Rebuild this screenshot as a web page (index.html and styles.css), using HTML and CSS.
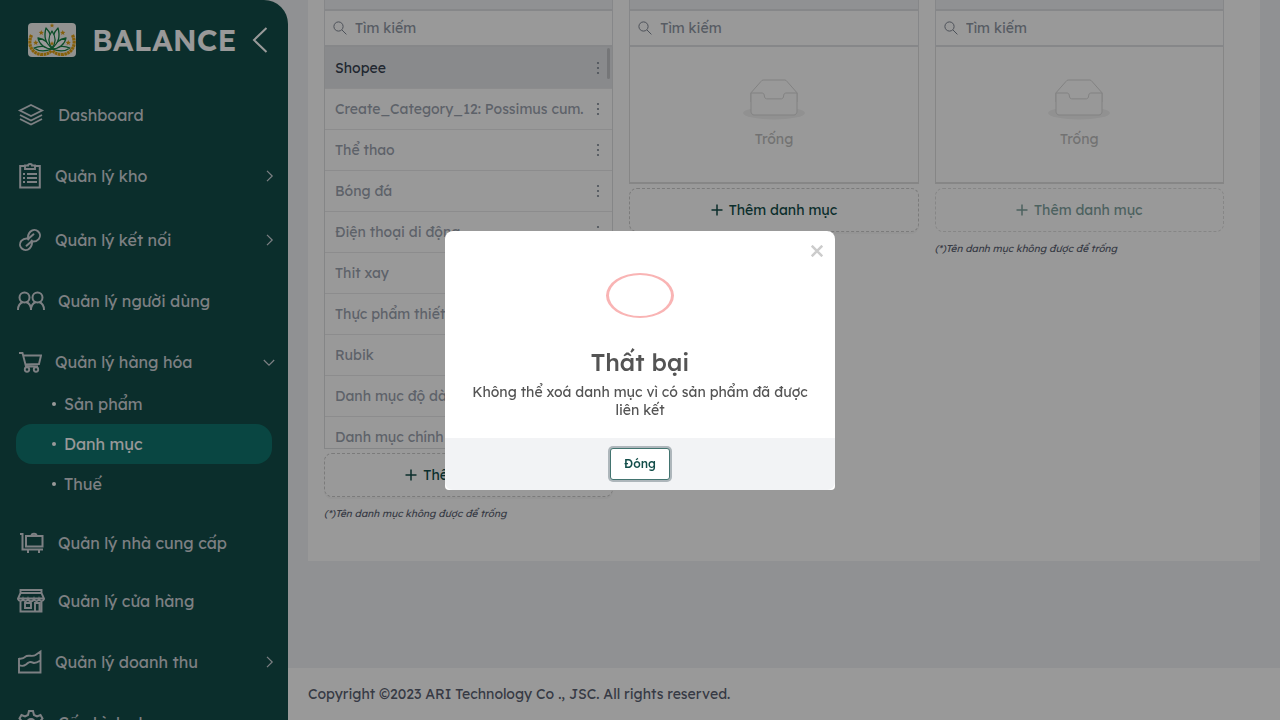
FILE: index.html
```html
<!DOCTYPE html>
<html lang="vi">
<head>
<meta charset="utf-8">
<meta name="viewport" content="width=device-width, initial-scale=1">
<title>Balance - Danh mục</title>
<link rel="stylesheet" href="styles.css">
</head>
<body>
<svg class="defs" aria-hidden="true">
  <symbol id="search" viewBox="0 0 14 14"><circle cx="5.500" cy="5.500" r="4.600"/><path d="M9 9l4.400 4.400"/></symbol>
  <symbol id="dots" viewBox="0 0 4 14"><circle cx="2" cy="2" r="1.100"/><circle cx="2" cy="7" r="1.100"/><circle cx="2" cy="12" r="1.100"/></symbol>
  <symbol id="plus" viewBox="0 0 12 12"><path d="M6 .5v11M.5 6h11"/></symbol>
  <symbol id="right" viewBox="0 0 14 14"><path d="M5 1.800l5.200 5.200L5 12.200"/></symbol>
  <symbol id="star" viewBox="-5 -5 10 10"><path d="M0-5L1.300-1.700 4.800-1.500 2.100.700 3 4.100 0 2.200-3 4.100-2.100.700-4.800-1.500-1.300-1.700z"/></symbol>
  <symbol id="empty" viewBox="0 0 64 41">
    <g transform="translate(0 1)" fill="none"><ellipse fill="#f2f2f2" stroke="none" cx="32" cy="33" rx="31" ry="6.500"/>
    <g stroke="#d9d9d9"><path d="M55 12.760L44.854 1.258C44.367.474 43.656 0 42.907 0H21.093c-.749 0-1.460.474-1.947 1.257L9 12.761V22h46v-9.240z"/>
    <path d="M41.613 15.931c0-1.605.994-2.930 2.227-2.931H55v18.137C55 33.260 53.680 35 52.050 35h-40.100C10.320 35 9 33.259 9 31.137V13h11.160c1.233 0 2.227 1.323 2.227 2.928v.022c0 1.605 1.005 2.901 2.237 2.901h14.752c1.232 0 2.237-1.308 2.237-2.913v-.007z" fill="#fefefe"/></g></g>
  </symbol>
</svg>

<aside class="sidebar">
  <div class="brand">
    <svg class="logo" viewBox="0 0 48 34" role="img" aria-label="Logo">
      <rect width="48" height="34" rx="4" fill="#f3f3f1"/>
      <g fill="none" stroke="#e0a010" stroke-width="3.200" stroke-dasharray="2.600 .500">
        <path d="M3.500 12C-1 22 4 31 14 31.500c5 0 8-2 9.500-4"/><path d="M44.500 12c4.500 10-.500 19-10.500 19.500-5 0-8-2-9.500-4"/>
      </g>
      <g fill="#fff" stroke="#158044" stroke-width="1.300" stroke-linejoin="round">
        <path d="M24 26C16 29 10 28 6 25c5-2 12-2 18 1zM24 26c8 3 14 2 18-1-5-2-12-2-18 1z"/>
        <path d="M24 26C17 26 11 21 10 15c6 1 12 5 14 11zM24 26c7 0 13-5 14-11-6 1-12 5-14 11z"/>
        <path d="M24 25C17 20 16 12 18 5c5 5 7 12 6 20zM24 25c7-5 8-13 6-20-5 5-7 12-6 20z"/>
        <path d="M24 25c-4-5-4-11 0-17 4 6 4 12 0 17z"/>
      </g>
      <g fill="#dda018"><use href="#star" x="21.500" y="0" width="5" height="5"/><use href="#star" x="10.500" y="7" width="5.500" height="5.500"/><use href="#star" x="32" y="7" width="5.500" height="5.500"/><use href="#star" x="5" y="17" width="5.500" height="5.500"/><use href="#star" x="37.500" y="17" width="5.500" height="5.500"/><use href="#star" x="21.500" y="18" width="5" height="5"/></g>
    </svg>
    <span class="brand-name">BALANCE</span>
    <button class="collapse" type="button" aria-label="Thu gọn"><svg viewBox="0 0 16 26"><path d="M14.500 1L2 13l12.500 12"/></svg></button>
  </div>
  <nav class="menu">
    <a class="item" href="#"><svg viewBox="0 0 28 28"><path d="M14 4l11 5.500L14 15 3 9.500zM3 14l11 5.500L25 14M3 18l11 5.500L25 18"/></svg>Dashboard</a>
    <div class="group"><button class="group-title" type="button"><svg viewBox="0 0 24 26"><path stroke-width="2" d="M7 3H2.200v21.500h19.600V3H17"/><path d="M7 2.500h3c0-2 4-2 4 0h3V6H7z"/><path d="M9 11h10M9 15h10M9 19h10M5 11h2M5 15h2M5 19h2" stroke-width="1.800"/></svg><span>Quản lý kho</span><svg class="arrow"><use href="#right"/></svg></button></div>
    <div class="group"><button class="group-title" type="button"><svg viewBox="0 0 24 24"><g stroke-width="2" stroke-linecap="round"><path d="M10.300 11.500C9.600 8.500 10.500 5.500 12.500 3.500a5.600 5.600 0 0 1 8.200 7.600c-2 2.200-4.500 2.900-7.200 2.300l-5 4.300"/><path d="M13.700 12.500c.700 3-.200 6-2.200 8a5.600 5.600 0 0 1-8.200-7.600c2-2.200 4.500-2.900 7.200-2.300l5-4.300"/></g></svg><span>Quản lý kết nối</span><svg class="arrow"><use href="#right"/></svg></button></div>
    <a class="item" href="#"><svg viewBox="0 0 28 28"><g stroke-width="2"><circle cx="7.500" cy="10.500" r="5"/><circle cx="20.500" cy="10.500" r="5"/><path d="M1 23c0-4 2-7 5-8M9 15c3 1 5 4 5 8 0-4 2-7 5-8M22 15c3 1 5 4 5 8"/></g></svg>Quản lý người dùng</a>
    <div class="group">
      <button class="group-title" type="button" aria-expanded="true"><svg viewBox="0 0 24 24"><path d="M1 3h3.500L8 16.500h12M5.500 5.500H23l-2 8.500-14 .500"/><circle cx="9" cy="19.500" r="2.200"/><circle cx="18" cy="19.500" r="2.200"/></svg><span>Quản lý hàng hóa</span><svg class="arrow open"><use href="#right"/></svg></button>
      <div class="submenu"><a href="#">Sản phẩm</a><a class="active" href="#">Danh mục</a><a href="#">Thuế</a></div>
    </div>
    <a class="item" href="#"><svg viewBox="0 0 28 28"><path stroke-width="2" d="M3 5h2.500v15.500H26M9 7h16.500v10.500H9zM11 21v3M22 21v3M14.500 7c0-3 5-3 5 0"/></svg>Quản lý nhà cung cấp</a>
    <a class="item" href="#"><svg viewBox="0 0 28 28"><path d="M3.500 7V3h21v4M3.500 6h21L27 11.500H1zM1 12c1 3 4 3 5 0 1 3 4 3 5 0 1 3 5 3 6 0 1 3 4 3 5 0 1 3 4 3 5 0M3.500 14v10.500h21V14M18 24v-8h4.500v8M8 16h6v5H8z"/></svg>Quản lý cửa hàng</a>
    <div class="group"><button class="group-title" type="button"><svg viewBox="0 0 24 24"><path d="M1 8.500c3 1 5-.500 7.500-2.500 3-1 6 1 9-1L22.500 1.500v21H1V8M1 15c3 1.500 5 1 7-.500 3-3 4-3 8-1.500 2 0 4-1 6.500-2.500"/></svg><span>Quản lý doanh thu</span><svg class="arrow"><use href="#right"/></svg></button></div>
    <a class="item" href="#"><svg viewBox="0 0 28 28"><g stroke-width="2"><path d="M12 2h4l1 4 3 1.500 3.500-1.500 2 3.500-2.500 3v3l2.500 3-2 3.500-3.500-1.500-3 1.500-1 4h-4l-1-4-3-1.500L4.500 22l-2-3.500 2.500-3v-3l-2.500-3 2-3.500L8 7.500 11 6z"/><circle cx="14" cy="14" r="4"/></g></svg>Cấu hình chung</a>
  </nav>
</aside>

<main class="main">
  <section class="panel">
    <div class="column">
      <div class="column-head"></div>
      <label class="search"><svg><use href="#search"/></svg><input type="text" placeholder="Tìm kiếm" aria-label="Tìm kiếm"></label>
      <ul class="list">
        <li class="selected"><span>Shopee</span><button type="button" aria-label="Tùy chọn"><svg><use href="#dots"/></svg></button></li>
        <li><span>Create_Category_12: Possimus cum.</span><button type="button" aria-label="Tùy chọn"><svg><use href="#dots"/></svg></button></li>
        <li><span>Thể thao</span><button type="button" aria-label="Tùy chọn"><svg><use href="#dots"/></svg></button></li>
        <li><span>Bóng đá</span><button type="button" aria-label="Tùy chọn"><svg><use href="#dots"/></svg></button></li>
        <li><span>Điện thoại di động</span><button type="button" aria-label="Tùy chọn"><svg><use href="#dots"/></svg></button></li>
        <li><span>Thit xay</span><button type="button" aria-label="Tùy chọn"><svg><use href="#dots"/></svg></button></li>
        <li><span>Thực phẩm thiết yếu</span><button type="button" aria-label="Tùy chọn"><svg><use href="#dots"/></svg></button></li>
        <li><span>Rubik</span><button type="button" aria-label="Tùy chọn"><svg><use href="#dots"/></svg></button></li>
        <li><span>Danh mục độ dài</span><button type="button" aria-label="Tùy chọn"><svg><use href="#dots"/></svg></button></li>
        <li><span>Danh mục chính</span><button type="button" aria-label="Tùy chọn"><svg><use href="#dots"/></svg></button></li>
      </ul>
      <button class="add" type="button"><svg><use href="#plus"/></svg>Thêm danh mục</button>
      <p class="note">(*)Tên danh mục không được để trống</p>
    </div>
    <div class="column">
      <div class="column-head"></div>
      <label class="search"><svg><use href="#search"/></svg><input type="text" placeholder="Tìm kiếm" aria-label="Tìm kiếm"></label>
      <div class="empty"><svg><use href="#empty"/></svg><span>Trống</span></div>
      <button class="add" type="button"><svg><use href="#plus"/></svg>Thêm danh mục</button>
    </div>
    <div class="column">
      <div class="column-head"></div>
      <label class="search"><svg><use href="#search"/></svg><input type="text" placeholder="Tìm kiếm" aria-label="Tìm kiếm"></label>
      <div class="empty"><svg><use href="#empty"/></svg><span>Trống</span></div>
      <button class="add" type="button" disabled><svg><use href="#plus"/></svg>Thêm danh mục</button>
      <p class="note">(*)Tên danh mục không được để trống</p>
    </div>
  </section>
  <footer class="footer">Copyright ©2023 ARI Technology Co ., JSC. All rights reserved.</footer>
</main>

<div class="overlay">
  <div class="modal" role="dialog" aria-modal="true" aria-labelledby="modal-title">
    <button class="close" type="button" aria-label="Close"><svg viewBox="0 0 12 12"><path d="M.7.700l10.600 10.600M11.300.700L.7 11.300"/></svg></button>
    <div class="modal-body">
      <div class="error-icon"></div>
      <h2 id="modal-title">Thất bại</h2>
      <p>Không thể xoá danh mục vì có sản phẩm đã được liên kết</p>
    </div>
    <div class="modal-footer"><button class="dismiss" type="button">Đóng</button></div>
  </div>
</div>
</body>
</html>
```

FILE: styles.css
```css
*, *::before, *::after { box-sizing: border-box; }

body {
  margin: 0;
  display: flex;
  height: 100vh;
  overflow: hidden;
  background: #f0f2f5;
  color: #5b6272;
  font-family: Lexend, Inter, "Noto Sans", sans-serif;
  font-size: 14px;
}

button, input { font: inherit; color: inherit; }
button { padding: 0; border: 0; background: none; }
a { color: inherit; text-decoration: none; }
svg { flex: none; fill: none; stroke: currentColor; }
.defs { position: absolute; width: 0; height: 0; }

/* Sidebar */
.sidebar {
  flex: 0 0 288px;
  overflow: hidden;
  background: #134e4a;
  border-top-right-radius: 24px;
  color: #d1d5db;
  font-size: 16px;
}
.brand {
  display: flex;
  align-items: center;
  height: 80px;
  margin-bottom: 6px;
  padding: 0 20px 0 28px;
  color: #fff;
}
.logo { width: 48px; height: 34px; stroke: none; }
.brand-name { margin-left: 16px; font-size: 30px; font-weight: 600; }
.collapse { display: flex; margin-left: auto; }
.collapse svg { width: 16px; height: 26px; stroke-width: 2; }

.item {
  display: flex;
  align-items: center;
  gap: 13px;
  height: 58px;
  padding: 0 17px;
}
.item svg { width: 28px; height: 28px; stroke-width: 1.9; }
.group { padding: 10px 0; }
.group-title {
  display: flex;
  align-items: center;
  gap: 13px;
  width: 100%;
  height: 44px;
  padding: 0 12px 0 18px;
  text-align: left;
}
.group-title svg { width: 24px; height: 26px; stroke-width: 1.9; }
.group-title .arrow { width: 14px; height: 14px; margin-left: auto; stroke-width: 1.2; }
.group-title .arrow.open { transform: rotate(90deg); }

.submenu { margin: 0 16px; }
.submenu a {
  display: flex;
  align-items: center;
  gap: 8px;
  height: 40px;
  padding-left: 36px;
  border-radius: 16px;
}
.submenu a::before { content: ""; width: 4px; height: 4px; border-radius: 50%; background: #fff; }
.submenu .active { background: #0f766e; color: #fff; }

/* Content */
.main { flex: 1; display: flex; flex-direction: column; min-width: 0; }
.panel {
  display: grid;
  grid-template-columns: repeat(3, minmax(0, 1fr));
  gap: 16px;
  margin: 0 20px;
  padding: 0 36px 39px 16px;
  background: #fff;
}
.column-head {
  height: 11px;
  border: 1px solid #e0e2e5;
  border-width: 0 1px 2px;
  background: #f0f2f5;
}
.search {
  display: flex;
  align-items: center;
  gap: 8px;
  height: 36px;
  padding: 0 8px;
  border: 1px solid #e0e2e5;
  border-width: 0 1px 2px;
  color: #9ca3af;
}
.search svg { width: 14px; height: 14px; color: #7f8794; }
.search input { flex: 1; min-width: 0; padding: 0; border: 0; outline: 0; background: none; }
.search input::placeholder { color: #9199a6; opacity: 1; }

.list {
  position: relative;
  height: 402px;
  margin: 0;
  padding: 0;
  overflow: hidden;
  border: 1px solid #dedfe1;
  border-top: 0;
  list-style: none;
  color: #9ca3af;
}
.list::after {
  content: "";
  position: absolute;
  top: 1px;
  right: 2px;
  width: 3px;
  height: 31px;
  border-radius: 2px;
  background: #c3c5c8;
}
.list li {
  display: flex;
  align-items: center;
  justify-content: space-between;
  height: 41px;
  padding: 0 12px 0 10px;
  border-bottom: 1px solid #eaeaec;
}
.list li.selected { height: 42px; background: #e4e7e9; color: #374151; }
.list span { overflow: hidden; white-space: nowrap; }
.list button { display: flex; }
.list button svg { width: 4px; height: 14px; fill: #7f8794; stroke: none; }

.empty {
  display: flex;
  flex-direction: column;
  align-items: center;
  gap: 10px;
  height: 137px;
  padding-top: 32px;
  border: 1px solid #e0e0e0;
  border-width: 0 1px 2px;
  color: #bfbfbf;
}
.empty svg { width: 64px; height: 41px; }
.add {
  display: flex;
  align-items: center;
  justify-content: center;
  gap: 6px;
  width: 100%;
  height: 44px;
  margin-top: 4px;
  border: 1px dashed #cdcdcd;
  border-radius: 8px;
  box-shadow: 0 2px 0 #f8f8f8;
  color: #134e4a;
}
.add svg { width: 12px; height: 12px; stroke-width: 1.5; }
.add:disabled { border-color: #e0e0e0; box-shadow: none; color: #7fa39f; }
.note { margin: 9px 0 0; font-size: 10px; line-height: 16px; font-style: italic; }
.footer {
  margin-top: auto;
  padding: 16px 20px;
  background: #fff;
  line-height: 20px;
}

/* Dialog */
.overlay {
  position: fixed;
  inset: 0;
  display: grid;
  place-items: center;
  background: rgba(0, 0, 0, .4);
}
.modal {
  position: relative;
  width: 390px;
  overflow: hidden;
  border-radius: 8px 8px 4px 4px;
  background: #fff;
  color: #545454;
  text-align: center;
}
.close { position: absolute; top: 14px; right: 12px; display: flex; color: #ccc; }
.close svg { width: 12px; height: 12px; stroke-width: 2.5; }
.modal-body { padding: 42px 24px 19px; }
.error-icon {
  width: 68px;
  height: 45px;
  margin: 0 auto;
  border: solid #f9b4b4;
  border-width: 2px 3px;
  border-radius: 50%;
}
.modal h2 { margin: 28px 0 5px; font-size: 24px; line-height: 32px; font-weight: 500; }
.modal p { margin: 0; line-height: 18px; }
.modal-footer {
  display: flex;
  justify-content: center;
  padding: 10px;
  border-radius: 0 0 8px 8px;
  background: #f2f3f5;
}
.dismiss {
  width: 60px;
  height: 32px;
  border: 1px solid #437470;
  border-radius: 3px;
  box-shadow: 0 0 0 2px #aeb6bb;
  background: #fff;
  color: #134e4a;
  font-size: 12px;
  font-weight: 500;
}
```
